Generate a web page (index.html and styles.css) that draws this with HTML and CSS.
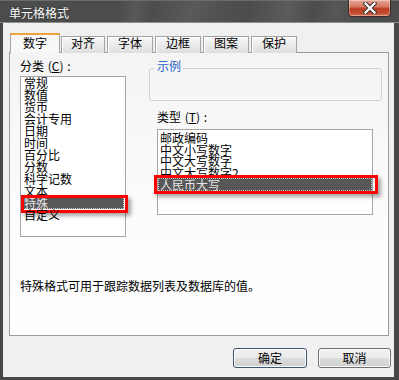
FILE: index.html
```html
<!DOCTYPE html>
<html lang="zh-CN">
<head>
<meta charset="utf-8">
<title>单元格格式</title>
<link rel="stylesheet" href="styles.css">
</head>
<body>
<div class="window">
  <div class="titlebar">
    <span class="title">单元格格式</span>
    <button class="close" aria-label="关闭">
      <svg width="14" height="12" viewBox="0 0 14 12">
        <path d="M2.5 1.5 L11.5 10.5 M11.5 1.5 L2.5 10.5" stroke="#3a3434" stroke-width="4.2" stroke-linecap="square" fill="none"/>
        <path d="M2.5 1.5 L11.5 10.5 M11.5 1.5 L2.5 10.5" stroke="#ffffff" stroke-width="2.2" stroke-linecap="square" fill="none"/>
      </svg>
    </button>
  </div>
  <div class="client">
    <div class="tabs">
      <div class="tab active">数字</div>
      <div class="tab first">对齐</div>
      <div class="tab">字体</div>
      <div class="tab">边框</div>
      <div class="tab">图案</div>
      <div class="tab">保护</div>
    </div>
    <div class="panel">
      <div class="cols">
        <div class="col-left">
          <div class="label">分类 (<u>C</u>) :</div>
          <ul class="list cat">
            <li>常规</li>
            <li>数值</li>
            <li>货币</li>
            <li>会计专用</li>
            <li>日期</li>
            <li>时间</li>
            <li>百分比</li>
            <li>分数</li>
            <li>科学记数</li>
            <li>文本</li>
            <li class="sel cat-sel">特殊<span class="mark"></span></li>
            <li>自定义</li>
          </ul>
        </div>
        <div class="col-right">
          <fieldset class="sample"><legend>示例</legend></fieldset>
          <div class="label type-label">类型 (<u>T</u>) :</div>
          <ul class="list types">
            <li>邮政编码</li>
            <li>中文小写数字</li>
            <li>中文大写数字</li>
            <li>中文大写数字2</li>
            <li class="sel type-sel">人民币大写<span class="mark"></span></li>
          </ul>
        </div>
      </div>
      <p class="desc">特殊格式可用于跟踪数据列表及数据库的值。</p>
    </div>
    <div class="buttons">
      <button class="btn default">确定</button>
      <button class="btn cancel">取消</button>
    </div>
  </div>
</div>
</body>
</html>
```

FILE: styles.css
```css
* { box-sizing: border-box; }

body {
  margin: 0;
  background: #464747;
  font-family: "Noto Sans CJK SC", "Liberation Sans", sans-serif;
  font-size: 12px;
  color: #000;
}

.window {
  width: 399px;
  height: 380px;
  background: #474848;
  display: flex;
  flex-direction: column;
  overflow: hidden;
}

.titlebar {
  height: 23px;
  flex: none;
  display: flex;
  align-items: flex-start;
  border-top: 1px solid #6c6c6c;
  border-bottom: 1px solid #8e8e8e;
  background:
    linear-gradient(100deg, rgba(255,255,255,0) 30%, rgba(255,255,255,0.07) 34%, rgba(255,255,255,0) 38%,
      rgba(255,255,255,0.08) 48%, rgba(255,255,255,0.02) 56%, rgba(255,255,255,0) 62%,
      rgba(255,255,255,0.09) 72%, rgba(255,255,255,0) 78%, rgba(255,255,255,0.06) 84%, rgba(255,255,255,0) 90%),
    #4b4c4c;
}

.title {
  color: #fff;
  line-height: 12px;
  padding: 6px 0 0 9px;
  text-shadow: 0 0 2px rgba(0,0,0,0.6);
}

.close {
  margin: -1px 8px 0 auto;
  width: 43px;
  height: 17px;
  padding: 0;
  border: 1px solid #3b2b28;
  border-top: none;
  border-radius: 0 0 4px 4px;
  background: linear-gradient(#e6a594 0%, #d57a64 40%, #bb3c22 55%, #c24a2e 80%, #d4704f 100%);
  box-shadow: inset 0 0 0 1px rgba(255,255,255,0.35);
  display: flex;
  align-items: center;
  justify-content: center;
}
.close svg { display: block; }

.client {
  flex: 1;
  margin: 0 5px 3px 3px;
  background: #f0f0f0;
  display: flex;
  flex-direction: column;
  padding: 10px 3px 0 6px;
}

.tabs {
  display: flex;
  align-items: flex-end;
  height: 20px;
  padding-left: 1px;
  position: relative;
  z-index: 2;
}

.tab {
  width: 46px;
  height: 17px;
  margin-left: 2px;
  border: 1px solid #a3a3a3;
  border-bottom: none;
  background: linear-gradient(#f8f8f8, #e9e9e9 55%, #dedede);
  box-shadow: inset 1px 1px 0 #fff;
  text-align: center;
  line-height: 12px;
  padding-top: 0;
}
.tab.first { margin-left: 1px; width: 44px; }

.tab.active {
  width: 50px;
  height: 20px;
  margin-left: 0;
  border-top: 2px solid #eda33a;
  background: #f8f8f8;
  box-shadow: none;
  padding-top: 2px;
}

.panel {
  width: 380px;
  height: 284px;
  margin-top: -1px;
  border: 1px solid #9c9c9c;
  background: linear-gradient(#f4f4f4, #fcfcfc 60%, #fefefe);
  padding: 7px 6px 0 10px;
  position: relative;
  z-index: 1;
}

.cols {
  display: grid;
  grid-template-columns: 106px 233px;
  column-gap: 23px;
}

.label {
  line-height: 12px;
  height: 12px;
  white-space: nowrap;
  word-spacing: 1px;
}
.col-left .label { margin-bottom: 4px; }

.list {
  list-style: none;
  margin: 0;
  background: #fff;
  border: 1px solid #a6a6a6;
}

.list li {
  position: relative;
  white-space: nowrap;
}

.cat {
  height: 161px;
  padding: 0 1px;
}
.cat li {
  line-height: 12px;
  height: 12px;
  padding-left: 2px;
}

.sel {
  background: #575757;
  color: #e6e6e6;
  outline: 1px dotted #c8c8c8;
  outline-offset: -1px;
}

.mark {
  position: absolute;
  border: 3px solid #ff0000;
  box-shadow: 3px 3px 4px rgba(0,0,0,0.35);
  pointer-events: none;
}
.cat-sel .mark { left: -1px; right: -4px; top: -2px; bottom: -4px; }

.sample {
  margin: 0;
  padding: 0;
  height: 41px;
  border: 1px solid #d3d3d3;
  border-radius: 3px;
}
.sample legend {
  margin-left: 5px;
  padding: 0 2px 4px;
  line-height: 12px;
  color: #2a66c6;
}

.type-label {
  margin-top: 10px;
  padding-left: 8px;
}

.types {
  margin: 6px 0 0 8px;
  width: 216px;
  height: 86px;
  padding: 2px 0 0 0;
}
.types li {
  line-height: 11.5px;
  height: 11.5px;
  padding-left: 2px;
}
.types li.sel {
  line-height: 13px;
  height: 13px;
}
.type-sel .mark { left: -4px; right: -6px; top: -3px; bottom: -3px; }

.desc {
  margin: 43px 0 0;
  line-height: 12px;
}

.buttons {
  display: flex;
  justify-content: flex-end;
  gap: 11px;
  margin-top: 12px;
}

.btn {
  height: 20px;
  padding: 0;
  font-family: inherit;
  font-size: 12px;
  line-height: 12px;
  color: #000;
  border: 1px solid #707070;
  border-radius: 3px;
  background: linear-gradient(#f2f2f2 0%, #ebebeb 50%, #dddddd 50%, #cfcfcf 100%);
  box-shadow: inset 0 0 0 1px #fbfbfb;
}
.btn.default { width: 74px; border-color: #3d5670; }
.btn.cancel { width: 73px; }
```
